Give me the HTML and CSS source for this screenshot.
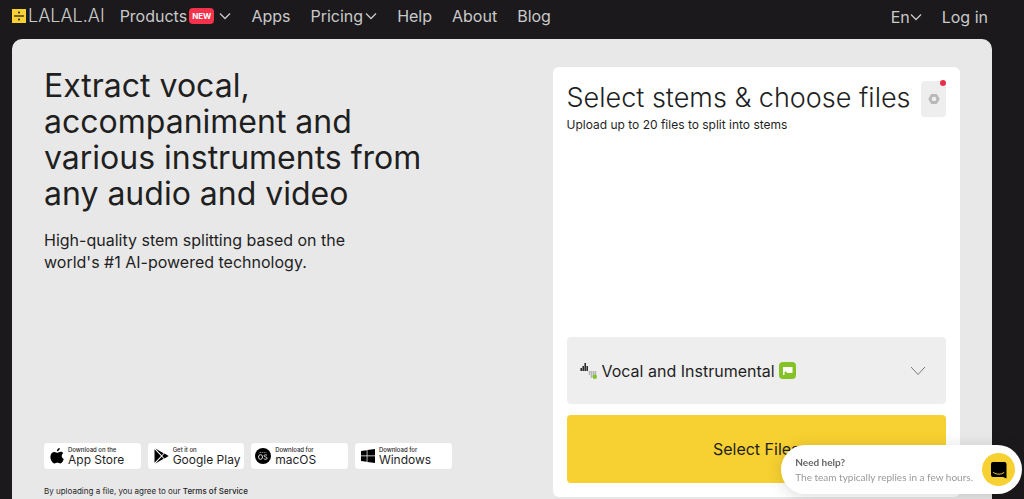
FILE: index.html
```html
<!DOCTYPE html>
<html lang="en">
  <head>
    <meta charset="UTF-8" />
    <meta name="viewport" content="width=device-width, initial-scale=1.0" />
    <title>LALAL.AI</title>
    <link rel="stylesheet" href="styles.css">
  </head>
  <body>
    <header class="header">
      <a class="logo" href="#">
        <svg width="14" height="14" viewBox="0 0 14 14" aria-hidden="true">
          <path fill="#f7d131" d="M0 0h14v14H0z" />
          <path fill="#1b191c" d="M2 6.400h10v1.200H2z" />
          <circle cx="7" cy="3.400" r="1" fill="#1b191c" />
          <circle cx="7" cy="10.600" r="1" fill="#1b191c" />
        </svg>
        <span>LALAL.AI</span>
      </a>
      <nav class="nav">
        <button class="nav-item" type="button">
          Products
          <span class="new">NEW</span>
          <svg class="chevron spaced" width="12" height="8" viewBox="0 0 12 8"><path d="M1 1.500l5 5 5-5" /></svg>
        </button>
        <a class="nav-item" href="#">Apps</a>
        <button class="nav-item" type="button">
          Pricing
          <svg class="chevron" width="12" height="8" viewBox="0 0 12 8"><path d="M1 1.500l5 5 5-5" /></svg>
        </button>
        <a class="nav-item" href="#">Help</a>
        <a class="nav-item" href="#">About</a>
        <a class="nav-item" href="#">Blog</a>
      </nav>
      <div class="nav account">
        <button class="nav-item lang" type="button">
          En
          <svg class="chevron" width="12" height="8" viewBox="0 0 12 8"><path d="M1 1.500l5 5 5-5" /></svg>
        </button>
        <a class="nav-item" href="#">Log in</a>
      </div>
    </header>

    <main class="hero">
      <section class="intro">
        <h1>Extract vocal, accompaniment and various instruments from any audio and video</h1>
        <p class="lead">High-quality stem splitting based on the world's #1 AI-powered technology.</p>

        <div class="stores">
          <a class="store" href="#">
            <svg width="14" height="18" viewBox="0 0 14 18">
              <path d="M9.800 1c.1 1.700-1.300 3.300-2.900 3.300C6.700 2.700 8.200 1.200 9.800 1zM13.300 6.300c-2.300 1.400-1.900 4.700.5 5.700-.7 2-2 4.400-3.500 4.400-1.100 0-1.500-.7-2.900-.7s-1.800.7-2.800.7C2.500 16.500.4 12.800.4 9.800c0-3.200 2-4.900 4-4.900 1.300 0 2.100.8 3.100.8.900 0 1.900-.9 3.300-.9 1 0 1.900.5 2.500 1.500z" />
            </svg>
            <span class="store-text"><small>Download on the</small>App Store</span>
          </a>
          <a class="store" href="#">
            <svg width="15" height="16" viewBox="0 0 15 16">
              <path d="M.5 1.200v13.600L7 8zM1.300.5l6.400 6.700 2-2zM1.300 15.500l6.400-6.700 2 2zM10.400 5.600 8.200 8l2.200 2.400L14.700 8z" />
            </svg>
            <span class="store-text"><small>Get it on</small>Google Play</span>
          </a>
          <a class="store mac" href="#">
            <svg width="16" height="16" viewBox="0 0 16 16">
              <circle cx="8" cy="8" r="8" />
              <g fill="none" stroke="#ddd">
                <ellipse cx="5.500" cy="9" rx="2" ry="2.300" />
                <path d="M12 7.400c-.6-.8-3-.9-3 .4 0 1.400 3.200.8 3.200 2.300 0 1.600-2.700 1.500-3.500.5" />
                <path stroke="#777" d="M4.500 4.500h7" stroke-dasharray="1.500 .6" />
              </g>
            </svg>
            <span class="store-text"><small>Download for</small>macOS</span>
          </a>
          <a class="store" href="#">
            <svg width="14" height="14" viewBox="0 0 14 14">
              <path d="M0 2l5.700-.8v5.400H0zM6.400 1.100 14 0v6.600H6.400zM0 7.300h5.700v5.500L0 12zM6.400 7.300H14V14l-7.600-1.100z" />
            </svg>
            <span class="store-text"><small>Download for</small>Windows</span>
          </a>
        </div>
        <p class="terms">By uploading a file, you agree to our <a href="#">Terms of Service</a></p>
      </section>

      <section class="uploader">
        <div class="uploader-head">
          <div>
            <h2>Select stems &amp; choose files</h2>
            <p>Upload up to 20 files to split into stems</p>
          </div>
          <button class="settings" type="button" aria-label="Settings">
            <svg width="12" height="12" viewBox="0 0 12 12">
              <path d="M3.300 1.500h5.400L11.200 6l-2.500 4.500H3.300L.8 6z" fill="#b9b9b9" stroke="#b9b9b9" stroke-linejoin="round" />
              <circle cx="6" cy="6" r="2.300" fill="#eee" />
            </svg>
            <span class="dot"></span>
          </button>
        </div>

        <div class="stem">
          <svg width="18" height="18" viewBox="0 0 18 18" aria-hidden="true">
            <path stroke="#222" stroke-width="1.500" d="M1.200 6v3M3.200 4v5M5.200 1v8M7.200 4v5" />
            <path stroke="#b5b5b5" stroke-width="1.500" d="M9.500 9v4M11.500 9v7M13.500 9v6M15.500 9v4" />
            <circle cx="14.800" cy="14.800" r="2.200" fill="#84c225" />
          </svg>
          <select class="stem-select" aria-label="Stem type">
            <option>Vocal and Instrumental</option>
          </select>
          <svg width="17" height="17" viewBox="0 0 17 17" aria-hidden="true">
            <rect width="17" height="17" rx="4" fill="#84c225" />
            <path fill="#fff" d="M4 5h9.500v6H7.500L5.500 10v3H4z" />
            <path fill="#84c225" d="M5.500 10.500 7 9l.8 1.500-.8 1z" />
          </svg>
          <svg class="stem-arrow" width="16" height="10" viewBox="0 0 16 10" aria-hidden="true"><path d="M1 1l7 7.500L15 1" /></svg>
        </div>
        <button class="select-files" type="button">Select Files</button>
      </section>
    </main>

    <aside class="help">
      <div>
        <strong>Need help?</strong>
        <p>The team typically replies in a few hours.</p>
      </div>
      <button class="help-button" type="button" aria-label="Open chat">
        <svg width="16" height="18" viewBox="0 0 16 18">
          <path d="M2 1h11.500a2 2 0 0 1 2 2v14.500L12 16H2a2 2 0 0 1-2-2V3a2 2 0 0 1 2-2z" />
          <path fill="none" stroke="#f7d131" stroke-linecap="round" d="M2.500 11.500c3 2.300 7.500 2.300 10.500 0" />
        </svg>
      </button>
    </aside>
  </body>
</html>
```
FILE: styles.css
```css
* {
  box-sizing: border-box;
}

body {
  margin: 0;
  min-height: 100vh;
  display: flex;
  flex-direction: column;
  background: #1b191c;
  color: #1f1f1f;
  font-family: Inter, "Liberation Sans", sans-serif;
}

h1, h2, p {
  margin: 0;
  font-weight: 400;
}

a {
  color: inherit;
  text-decoration: none;
}

button {
  border: 0;
  padding: 0;
  background: none;
  color: inherit;
  font: inherit;
  cursor: pointer;
}

.header {
  display: flex;
  align-items: center;
  height: 39px;
  padding: 0 36px 8px 12px;
  color: #c9c9c9;
}

.logo {
  display: flex;
  align-items: center;
  gap: 2px;
  margin-right: 15px;
  font-size: 18px;
  font-weight: 300;
}

.nav {
  display: flex;
  gap: 20px;
  font-size: 16px;
}

.nav-item {
  display: flex;
  align-items: center;
  gap: 2px;
}

.account {
  margin-left: auto;
  padding-top: 2px;
}

.lang {
  gap: 0;
}

.chevron {
  fill: none;
  stroke: currentColor;
  stroke-width: 1.3;
}

.spaced {
  margin-left: 3px;
}

.new {
  padding: 0 3px;
  border-radius: 4px;
  background: #f5314c;
  color: #fff;
  font-size: 8px;
  font-weight: 700;
  line-height: 16px;
}

.hero {
  flex: 1;
  display: grid;
  grid-template-columns: 1fr 1fr;
  gap: 101px;
  margin: 0 32px 0 12px;
  padding: 28px 32px 2px;
  border-radius: 10px 10px 0 0;
  background: #e8e8e8;
}

.intro {
  display: flex;
  flex-direction: column;
}

h1 {
  padding-top: 1px;
  font-size: 32px;
  line-height: 36px;
}

.lead {
  max-width: 340px;
  margin-top: 17px;
  font-size: 16px;
  line-height: 22px;
}

.stores {
  display: grid;
  grid-template-columns: repeat(4, 1fr);
  gap: 7px;
  margin-top: auto;
}

.store {
  display: flex;
  align-items: center;
  gap: 4px;
  height: 26px;
  padding-left: 6px;
  border-radius: 4px;
  background: #fff;
}

.mac {
  padding-left: 4px;
}

.store svg {
  flex: none;
}

.store-text {
  font-size: 12px;
  line-height: 13px;
  white-space: nowrap;
}

.store-text small {
  display: block;
  font-size: 6px;
  font-weight: 500;
  line-height: 6px;
}

.terms {
  margin-top: 16px;
  font-size: 8px;
  line-height: 12px;
}

.terms a {
  font-weight: 500;
}

.uploader {
  display: flex;
  flex-direction: column;
  padding: 14px;
  border-radius: 6px;
  background: #fff;
}

.uploader-head {
  display: flex;
  justify-content: space-between;
  margin-bottom: auto;
}

h2 {
  font-size: 27px;
  font-weight: 350;
  line-height: 34px;
  white-space: nowrap;
}

.uploader-head p {
  font-size: 12px;
  line-height: 20px;
}

.settings {
  position: relative;
  display: grid;
  place-items: center;
  width: 25px;
  height: 36px;
  border-radius: 4px;
  background: #eee;
}

.dot {
  position: absolute;
  top: -1px;
  right: 0;
  width: 6px;
  height: 6px;
  border-radius: 50%;
  background: #e8304a;
}

.stem {
  display: flex;
  align-items: center;
  gap: 4px;
  height: 67px;
  padding: 0 20px 0 13px;
  border-radius: 4px;
  background: #eee;
}

.stem-select {
  appearance: none;
  field-sizing: content;
  border: 0;
  padding: 0;
  background: none;
  color: inherit;
  font: inherit;
  font-size: 16px;
}

.stem-arrow {
  margin-left: auto;
  fill: none;
  stroke: #777;
}

.select-files {
  height: 68px;
  margin-top: 11px;
  border-radius: 4px;
  background: #f7d131;
  font-size: 16px;
}

.help {
  position: fixed;
  right: 2px;
  bottom: 5px;
  display: flex;
  align-items: center;
  gap: 9px;
  height: 49px;
  padding: 0 7px 0 14px;
  border-radius: 25px;
  background: #fff;
  box-shadow: 0 2px 16px rgba(0, 0, 0, 0.15);
  color: #666;
  font-family: Lato, "Noto Sans", sans-serif;
  font-size: 10px;
  line-height: 15px;
}

.help strong {
  font-weight: 700;
}

.help p {
  color: #999;
}

.help-button {
  display: grid;
  place-items: center;
  width: 33px;
  height: 33px;
  border-radius: 50%;
  background: #f7d131;
}
```
